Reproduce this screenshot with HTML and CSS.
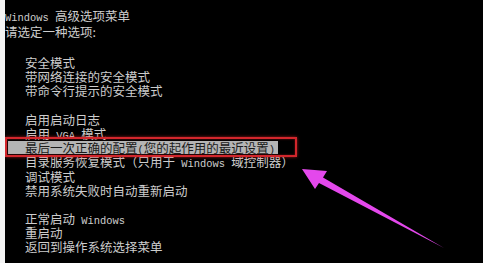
FILE: index.html
```html
<!DOCTYPE html>
<html lang="zh-CN">
<head>
<meta charset="utf-8">
<title>Windows 高级选项菜单</title>
<link rel="stylesheet" href="styles.css">
</head>
<body>
<div class="screen">
  <div class="title">
    <div class="line"><span class="en">Windows </span>高级选项菜单</div>
    <div class="line">请选定一种选项:</div>
  </div>
  <div class="menu">
    <div class="item">安全模式</div>
    <div class="item">带网络连接的安全模式</div>
    <div class="item">带命令行提示的安全模式</div>
    <div class="gap"></div>
    <div class="item">启用启动日志</div>
    <div class="item">启用<span class="en"> VGA </span>模式</div>
    <div class="item selected"><span class="sel">最后一次正确的配置<span class="en">(</span>您的起作用的最近设置<span class="en">)</span></span></div>
    <div class="item">目录服务恢复模式（只用于<span class="en"> Windows </span>域控制器）</div>
    <div class="item">调试模式</div>
    <div class="item">禁用系统失败时自动重新启动</div>
    <div class="gap"></div>
    <div class="item">正常启动<span class="en"> Windows</span></div>
    <div class="item">重启动</div>
    <div class="item">返回到操作系统选择菜单</div>
  </div>
  <svg class="arrow" width="483" height="263" viewBox="0 0 483 263">
    <polygon points="302,169 327,171 323,177.5 444,248 319,183 315,189" fill="#e448ec"/>
  </svg>
</div>
</body>
</html>
```
FILE: styles.css
```css
html, body {
  margin: 0;
  padding: 0;
  background: #f4f4f4;
}
body {
  width: 483px;
  height: 263px;
  overflow: hidden;
}
.screen {
  margin-left: 5px;
  height: 263px;
  background: #000;
  color: #cdcdcd;
  font-family: "Noto Sans CJK SC", "Liberation Mono", monospace;
  font-size: 12.5px;
  position: relative;
  overflow: hidden;
}
.en {
  font-family: "Liberation Mono", monospace;
  font-size: 10.4px;
  white-space: pre;
}
.title {
  padding-top: 8px;
}
.title .line {
  height: 16px;
  line-height: 16px;
  white-space: nowrap;
}
.menu {
  margin-top: 16px;
}
.item {
  height: 14.2px;
  line-height: 14.2px;
  padding-left: 20px;
  white-space: nowrap;
}
.gap {
  height: 14.2px;
}
.selected {
  position: relative;
  padding-left: 3px;
}
.selected::before {
  content: "";
  position: absolute;
  left: 0;
  top: -4px;
  width: 288px;
  height: 16px;
  border: 2px solid #d2262c;
  box-shadow: 0 0 3px rgba(220, 40, 40, 0.7), inset 0 0 2px rgba(220, 40, 40, 0.6);
}
.sel {
  display: inline-block;
  background: #b4b4b4;
  color: #1a1a1a;
  line-height: 13px;
  height: 13px;
  padding-left: 17px;
  padding-right: 3px;
  vertical-align: top;
}
.arrow {
  position: absolute;
  left: -5px;
  top: 0;
  pointer-events: none;
}
```
